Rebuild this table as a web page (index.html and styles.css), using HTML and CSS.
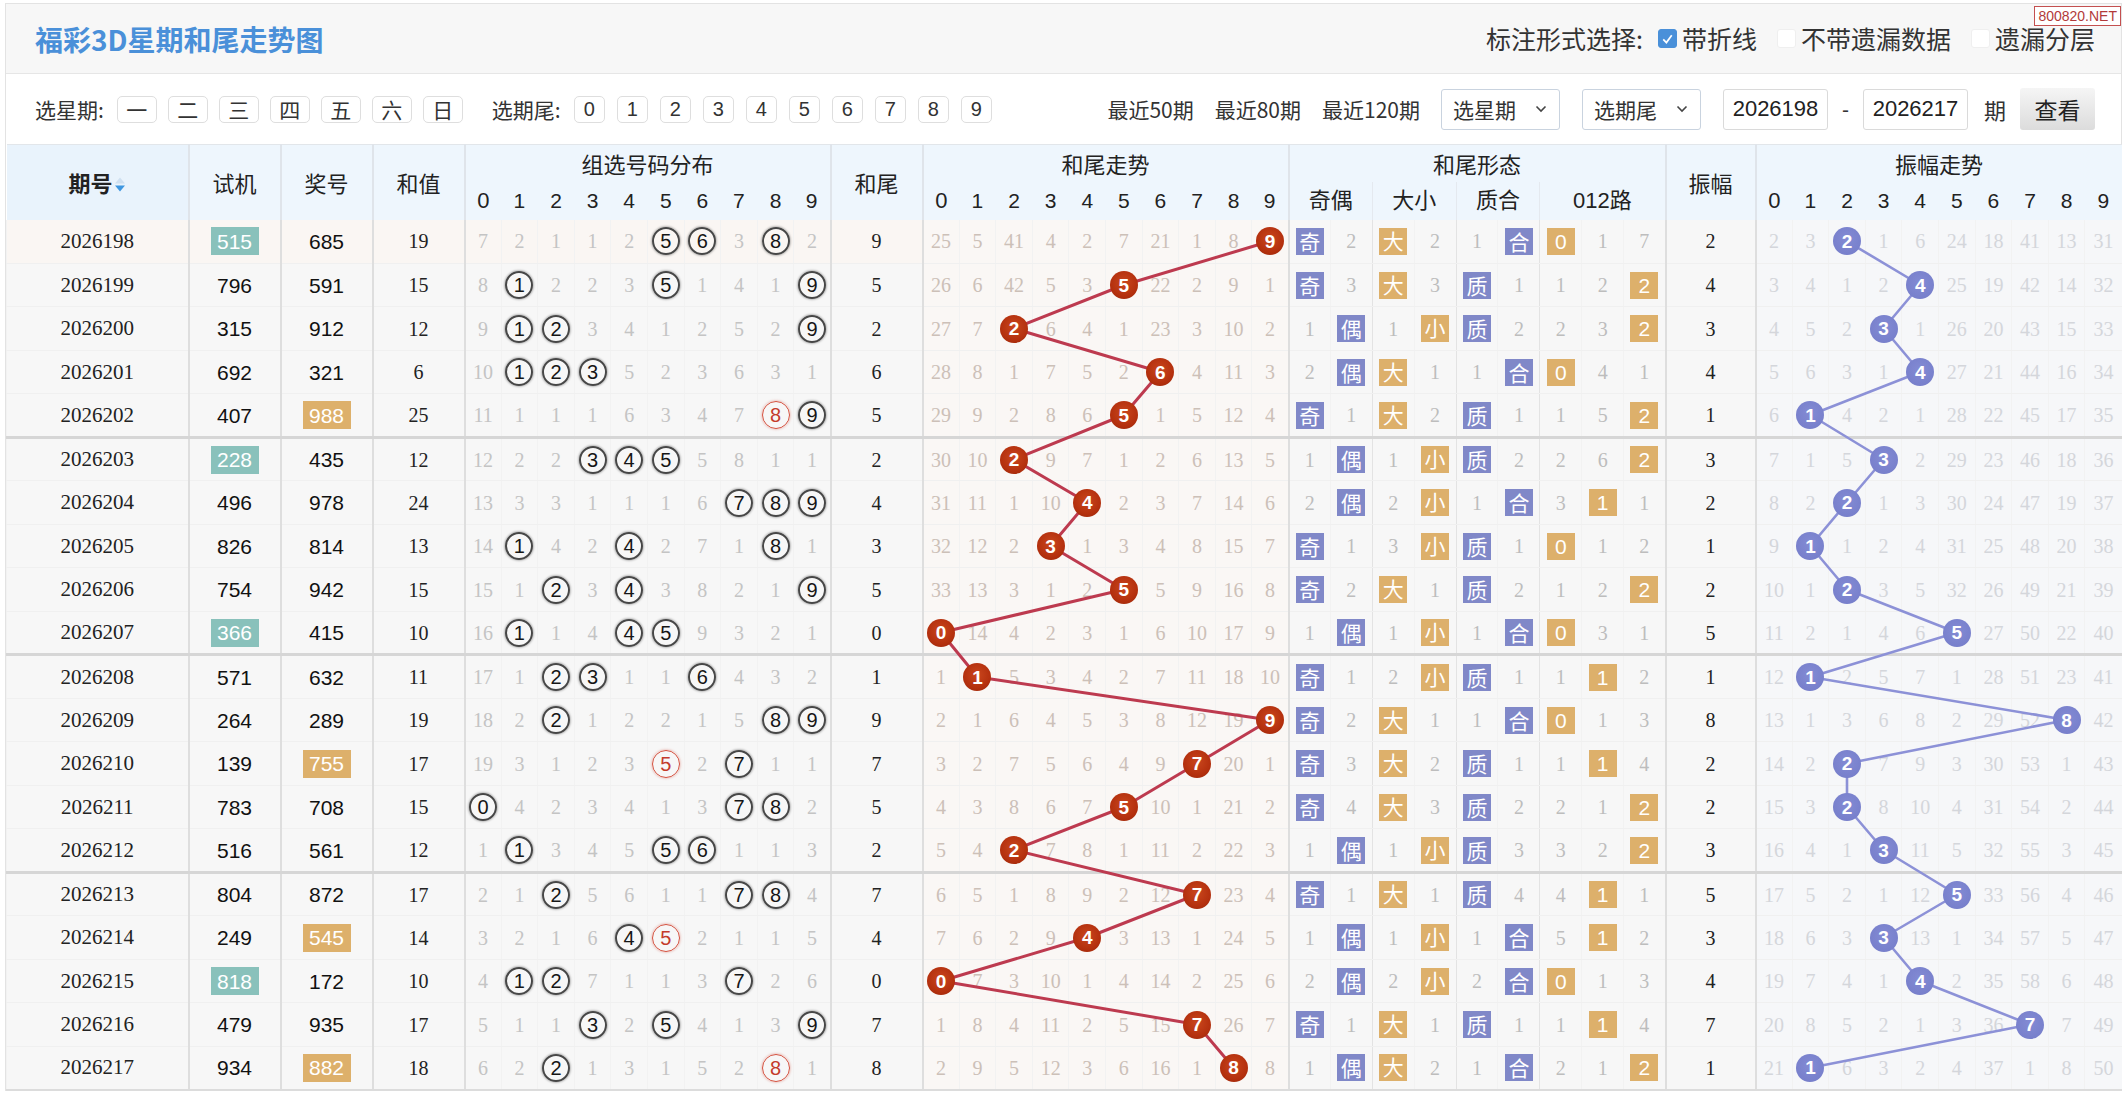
FILE: index.html
```html
<!DOCTYPE html>
<html lang="zh-CN">
<head>
<meta charset="utf-8">
<title>福彩3D星期和尾走势图</title>
<link rel="stylesheet" href="styles.css">
</head>
<body>
<div class="page">
  <div class="titlebar">
    <h1 class="title">福彩3D星期和尾走势图</h1>
    <div class="marks">
      <span class="mlabel">标注形式选择:</span>
      <span class="cb on"><svg viewBox="0 0 18 18" width="18" height="18"><polyline points="4.5,9.5 7.8,12.8 13.5,5" fill="none" stroke="#fff" stroke-width="1.8"/></svg></span><span class="mtext">带折线</span>
      <span class="cb"></span><span class="mtext">不带遗漏数据</span>
      <span class="cb"></span><span class="mtext">遗漏分层</span>
    </div>
    <span class="wm">800820.NET</span>
  </div>

  <div class="filters">
    <span class="lbl">选星期:</span>
    <div class="btns wk">
      <span class="btn">一</span><span class="btn">二</span><span class="btn">三</span><span class="btn">四</span><span class="btn">五</span><span class="btn">六</span><span class="btn">日</span>
    </div>
    <span class="lbl lbl2">选期尾:</span>
    <div class="btns tl">
      <span class="btn">0</span><span class="btn">1</span><span class="btn">2</span><span class="btn">3</span><span class="btn">4</span><span class="btn">5</span><span class="btn">6</span><span class="btn">7</span><span class="btn">8</span><span class="btn">9</span>
    </div>
    <div class="right">
      <span class="near">最近50期</span>
      <span class="near">最近80期</span>
      <span class="near">最近120期</span>
      <span class="sel">选星期<svg class="chev" viewBox="0 0 12 8" width="12" height="8"><polyline points="1.5,1.5 6,6 10.5,1.5" fill="none" stroke="#444" stroke-width="1.6"/></svg></span>
      <span class="sel">选期尾<svg class="chev" viewBox="0 0 12 8" width="12" height="8"><polyline points="1.5,1.5 6,6 10.5,1.5" fill="none" stroke="#444" stroke-width="1.6"/></svg></span>
      <span class="ipt">2026198</span>
      <span class="dash">-</span>
      <span class="ipt">2026217</span>
      <span class="qi">期</span>
      <span class="go">查看</span>
    </div>
  </div>

  <div class="chart">
    <table class="trend">
      <colgroup>
        <col class="w-qh"><col class="w-m"><col class="w-m"><col class="w-m">
        <col class="w-d"><col class="w-d"><col class="w-d"><col class="w-d"><col class="w-d"><col class="w-d"><col class="w-d"><col class="w-d"><col class="w-d"><col class="w-d">
        <col class="w-m">
        <col class="w-d"><col class="w-d"><col class="w-d"><col class="w-d"><col class="w-d"><col class="w-d"><col class="w-d"><col class="w-d"><col class="w-d"><col class="w-d">
        <col class="w-x"><col class="w-x"><col class="w-x"><col class="w-x"><col class="w-x"><col class="w-x"><col class="w-x"><col class="w-x"><col class="w-x">
        <col class="w-z">
        <col class="w-d"><col class="w-d"><col class="w-d"><col class="w-d"><col class="w-d"><col class="w-d"><col class="w-d"><col class="w-d"><col class="w-d"><col class="w-d">
      </colgroup>
      <thead>
        <tr class="h1">
          <th rowspan="2" class="qh">期号<svg class="sort" viewBox="0 0 12 18" width="12" height="18"><polygon points="6,1.5 11,7.5 1,7.5" fill="#cfe0f0"/><polygon points="1,9.5 11,9.5 6,15.5" fill="#3f97e0"/></svg></th>
          <th rowspan="2" class="v">试机</th>
          <th rowspan="2" class="v">奖号</th>
          <th rowspan="2" class="v">和值</th>
          <th colspan="10" class="v">组选号码分布</th>
          <th rowspan="2" class="v">和尾</th>
          <th colspan="10" class="v">和尾走势</th>
          <th colspan="9" class="v">和尾形态</th>
          <th rowspan="2" class="v">振幅</th>
          <th colspan="10" class="v">振幅走势</th>
        </tr>
        <tr class="h2">
          <th class="v">0</th><th>1</th><th>2</th><th>3</th><th>4</th><th>5</th><th>6</th><th>7</th><th>8</th><th>9</th>
          <th class="v">0</th><th>1</th><th>2</th><th>3</th><th>4</th><th>5</th><th>6</th><th>7</th><th>8</th><th>9</th>
          <th colspan="2" class="v">奇偶</th><th colspan="2" class="s">大小</th><th colspan="2" class="s">质合</th><th colspan="3" class="s">012路</th>
          <th class="v">0</th><th>1</th><th>2</th><th>3</th><th>4</th><th>5</th><th>6</th><th>7</th><th>8</th><th>9</th>
        </tr>
      </thead>
      <tbody>
<tr class="hot"><td>2026198</td><td><i class="st">515</i></td><td>685</td><td>19</td><td>7</td><td>2</td><td>1</td><td>1</td><td>2</td><td><i class="rg">5</i></td><td><i class="rg">6</i></td><td>3</td><td><i class="rg">8</i></td><td>2</td><td>9</td><td>25</td><td>5</td><td>41</td><td>4</td><td>2</td><td>7</td><td>21</td><td>1</td><td>8</td><td><i class="bh">9</i></td><td><i class="tp">奇</i></td><td>2</td><td><i class="to">大</i></td><td>2</td><td>1</td><td><i class="tp">合</i></td><td><i class="to">0</i></td><td>1</td><td>7</td><td>2</td><td>2</td><td>3</td><td><i class="bz">2</i></td><td>1</td><td>6</td><td>24</td><td>18</td><td>41</td><td>13</td><td>31</td></tr>
<tr><td>2026199</td><td>796</td><td>591</td><td>15</td><td>8</td><td><i class="rg">1</i></td><td>2</td><td>2</td><td>3</td><td><i class="rg">5</i></td><td>1</td><td>4</td><td>1</td><td><i class="rg">9</i></td><td>5</td><td>26</td><td>6</td><td>42</td><td>5</td><td>3</td><td><i class="bh">5</i></td><td>22</td><td>2</td><td>9</td><td>1</td><td><i class="tp">奇</i></td><td>3</td><td><i class="to">大</i></td><td>3</td><td><i class="tp">质</i></td><td>1</td><td>1</td><td>2</td><td><i class="to">2</i></td><td>4</td><td>3</td><td>4</td><td>1</td><td>2</td><td><i class="bz">4</i></td><td>25</td><td>19</td><td>42</td><td>14</td><td>32</td></tr>
<tr><td>2026200</td><td>315</td><td>912</td><td>12</td><td>9</td><td><i class="rg">1</i></td><td><i class="rg">2</i></td><td>3</td><td>4</td><td>1</td><td>2</td><td>5</td><td>2</td><td><i class="rg">9</i></td><td>2</td><td>27</td><td>7</td><td><i class="bh">2</i></td><td>6</td><td>4</td><td>1</td><td>23</td><td>3</td><td>10</td><td>2</td><td>1</td><td><i class="tp">偶</i></td><td>1</td><td><i class="to">小</i></td><td><i class="tp">质</i></td><td>2</td><td>2</td><td>3</td><td><i class="to">2</i></td><td>3</td><td>4</td><td>5</td><td>2</td><td><i class="bz">3</i></td><td>1</td><td>26</td><td>20</td><td>43</td><td>15</td><td>33</td></tr>
<tr><td>2026201</td><td>692</td><td>321</td><td>6</td><td>10</td><td><i class="rg">1</i></td><td><i class="rg">2</i></td><td><i class="rg">3</i></td><td>5</td><td>2</td><td>3</td><td>6</td><td>3</td><td>1</td><td>6</td><td>28</td><td>8</td><td>1</td><td>7</td><td>5</td><td>2</td><td><i class="bh">6</i></td><td>4</td><td>11</td><td>3</td><td>2</td><td><i class="tp">偶</i></td><td><i class="to">大</i></td><td>1</td><td>1</td><td><i class="tp">合</i></td><td><i class="to">0</i></td><td>4</td><td>1</td><td>4</td><td>5</td><td>6</td><td>3</td><td>1</td><td><i class="bz">4</i></td><td>27</td><td>21</td><td>44</td><td>16</td><td>34</td></tr>
<tr><td>2026202</td><td>407</td><td><i class="jo">988</i></td><td>25</td><td>11</td><td>1</td><td>1</td><td>1</td><td>6</td><td>3</td><td>4</td><td>7</td><td><i class="rg rr">8</i></td><td><i class="rg">9</i></td><td>5</td><td>29</td><td>9</td><td>2</td><td>8</td><td>6</td><td><i class="bh">5</i></td><td>1</td><td>5</td><td>12</td><td>4</td><td><i class="tp">奇</i></td><td>1</td><td><i class="to">大</i></td><td>2</td><td><i class="tp">质</i></td><td>1</td><td>1</td><td>5</td><td><i class="to">2</i></td><td>1</td><td>6</td><td><i class="bz">1</i></td><td>4</td><td>2</td><td>1</td><td>28</td><td>22</td><td>45</td><td>17</td><td>35</td></tr>
<tr><td>2026203</td><td><i class="st">228</i></td><td>435</td><td>12</td><td>12</td><td>2</td><td>2</td><td><i class="rg">3</i></td><td><i class="rg">4</i></td><td><i class="rg">5</i></td><td>5</td><td>8</td><td>1</td><td>1</td><td>2</td><td>30</td><td>10</td><td><i class="bh">2</i></td><td>9</td><td>7</td><td>1</td><td>2</td><td>6</td><td>13</td><td>5</td><td>1</td><td><i class="tp">偶</i></td><td>1</td><td><i class="to">小</i></td><td><i class="tp">质</i></td><td>2</td><td>2</td><td>6</td><td><i class="to">2</i></td><td>3</td><td>7</td><td>1</td><td>5</td><td><i class="bz">3</i></td><td>2</td><td>29</td><td>23</td><td>46</td><td>18</td><td>36</td></tr>
<tr><td>2026204</td><td>496</td><td>978</td><td>24</td><td>13</td><td>3</td><td>3</td><td>1</td><td>1</td><td>1</td><td>6</td><td><i class="rg">7</i></td><td><i class="rg">8</i></td><td><i class="rg">9</i></td><td>4</td><td>31</td><td>11</td><td>1</td><td>10</td><td><i class="bh">4</i></td><td>2</td><td>3</td><td>7</td><td>14</td><td>6</td><td>2</td><td><i class="tp">偶</i></td><td>2</td><td><i class="to">小</i></td><td>1</td><td><i class="tp">合</i></td><td>3</td><td><i class="to">1</i></td><td>1</td><td>2</td><td>8</td><td>2</td><td><i class="bz">2</i></td><td>1</td><td>3</td><td>30</td><td>24</td><td>47</td><td>19</td><td>37</td></tr>
<tr><td>2026205</td><td>826</td><td>814</td><td>13</td><td>14</td><td><i class="rg">1</i></td><td>4</td><td>2</td><td><i class="rg">4</i></td><td>2</td><td>7</td><td>1</td><td><i class="rg">8</i></td><td>1</td><td>3</td><td>32</td><td>12</td><td>2</td><td><i class="bh">3</i></td><td>1</td><td>3</td><td>4</td><td>8</td><td>15</td><td>7</td><td><i class="tp">奇</i></td><td>1</td><td>3</td><td><i class="to">小</i></td><td><i class="tp">质</i></td><td>1</td><td><i class="to">0</i></td><td>1</td><td>2</td><td>1</td><td>9</td><td><i class="bz">1</i></td><td>1</td><td>2</td><td>4</td><td>31</td><td>25</td><td>48</td><td>20</td><td>38</td></tr>
<tr><td>2026206</td><td>754</td><td>942</td><td>15</td><td>15</td><td>1</td><td><i class="rg">2</i></td><td>3</td><td><i class="rg">4</i></td><td>3</td><td>8</td><td>2</td><td>1</td><td><i class="rg">9</i></td><td>5</td><td>33</td><td>13</td><td>3</td><td>1</td><td>2</td><td><i class="bh">5</i></td><td>5</td><td>9</td><td>16</td><td>8</td><td><i class="tp">奇</i></td><td>2</td><td><i class="to">大</i></td><td>1</td><td><i class="tp">质</i></td><td>2</td><td>1</td><td>2</td><td><i class="to">2</i></td><td>2</td><td>10</td><td>1</td><td><i class="bz">2</i></td><td>3</td><td>5</td><td>32</td><td>26</td><td>49</td><td>21</td><td>39</td></tr>
<tr><td>2026207</td><td><i class="st">366</i></td><td>415</td><td>10</td><td>16</td><td><i class="rg">1</i></td><td>1</td><td>4</td><td><i class="rg">4</i></td><td><i class="rg">5</i></td><td>9</td><td>3</td><td>2</td><td>1</td><td>0</td><td><i class="bh">0</i></td><td>14</td><td>4</td><td>2</td><td>3</td><td>1</td><td>6</td><td>10</td><td>17</td><td>9</td><td>1</td><td><i class="tp">偶</i></td><td>1</td><td><i class="to">小</i></td><td>1</td><td><i class="tp">合</i></td><td><i class="to">0</i></td><td>3</td><td>1</td><td>5</td><td>11</td><td>2</td><td>1</td><td>4</td><td>6</td><td><i class="bz">5</i></td><td>27</td><td>50</td><td>22</td><td>40</td></tr>
<tr><td>2026208</td><td>571</td><td>632</td><td>11</td><td>17</td><td>1</td><td><i class="rg">2</i></td><td><i class="rg">3</i></td><td>1</td><td>1</td><td><i class="rg">6</i></td><td>4</td><td>3</td><td>2</td><td>1</td><td>1</td><td><i class="bh">1</i></td><td>5</td><td>3</td><td>4</td><td>2</td><td>7</td><td>11</td><td>18</td><td>10</td><td><i class="tp">奇</i></td><td>1</td><td>2</td><td><i class="to">小</i></td><td><i class="tp">质</i></td><td>1</td><td>1</td><td><i class="to">1</i></td><td>2</td><td>1</td><td>12</td><td><i class="bz">1</i></td><td>2</td><td>5</td><td>7</td><td>1</td><td>28</td><td>51</td><td>23</td><td>41</td></tr>
<tr><td>2026209</td><td>264</td><td>289</td><td>19</td><td>18</td><td>2</td><td><i class="rg">2</i></td><td>1</td><td>2</td><td>2</td><td>1</td><td>5</td><td><i class="rg">8</i></td><td><i class="rg">9</i></td><td>9</td><td>2</td><td>1</td><td>6</td><td>4</td><td>5</td><td>3</td><td>8</td><td>12</td><td>19</td><td><i class="bh">9</i></td><td><i class="tp">奇</i></td><td>2</td><td><i class="to">大</i></td><td>1</td><td>1</td><td><i class="tp">合</i></td><td><i class="to">0</i></td><td>1</td><td>3</td><td>8</td><td>13</td><td>1</td><td>3</td><td>6</td><td>8</td><td>2</td><td>29</td><td>52</td><td><i class="bz">8</i></td><td>42</td></tr>
<tr><td>2026210</td><td>139</td><td><i class="jo">755</i></td><td>17</td><td>19</td><td>3</td><td>1</td><td>2</td><td>3</td><td><i class="rg rr">5</i></td><td>2</td><td><i class="rg">7</i></td><td>1</td><td>1</td><td>7</td><td>3</td><td>2</td><td>7</td><td>5</td><td>6</td><td>4</td><td>9</td><td><i class="bh">7</i></td><td>20</td><td>1</td><td><i class="tp">奇</i></td><td>3</td><td><i class="to">大</i></td><td>2</td><td><i class="tp">质</i></td><td>1</td><td>1</td><td><i class="to">1</i></td><td>4</td><td>2</td><td>14</td><td>2</td><td><i class="bz">2</i></td><td>7</td><td>9</td><td>3</td><td>30</td><td>53</td><td>1</td><td>43</td></tr>
<tr><td>2026211</td><td>783</td><td>708</td><td>15</td><td><i class="rg">0</i></td><td>4</td><td>2</td><td>3</td><td>4</td><td>1</td><td>3</td><td><i class="rg">7</i></td><td><i class="rg">8</i></td><td>2</td><td>5</td><td>4</td><td>3</td><td>8</td><td>6</td><td>7</td><td><i class="bh">5</i></td><td>10</td><td>1</td><td>21</td><td>2</td><td><i class="tp">奇</i></td><td>4</td><td><i class="to">大</i></td><td>3</td><td><i class="tp">质</i></td><td>2</td><td>2</td><td>1</td><td><i class="to">2</i></td><td>2</td><td>15</td><td>3</td><td><i class="bz">2</i></td><td>8</td><td>10</td><td>4</td><td>31</td><td>54</td><td>2</td><td>44</td></tr>
<tr><td>2026212</td><td>516</td><td>561</td><td>12</td><td>1</td><td><i class="rg">1</i></td><td>3</td><td>4</td><td>5</td><td><i class="rg">5</i></td><td><i class="rg">6</i></td><td>1</td><td>1</td><td>3</td><td>2</td><td>5</td><td>4</td><td><i class="bh">2</i></td><td>7</td><td>8</td><td>1</td><td>11</td><td>2</td><td>22</td><td>3</td><td>1</td><td><i class="tp">偶</i></td><td>1</td><td><i class="to">小</i></td><td><i class="tp">质</i></td><td>3</td><td>3</td><td>2</td><td><i class="to">2</i></td><td>3</td><td>16</td><td>4</td><td>1</td><td><i class="bz">3</i></td><td>11</td><td>5</td><td>32</td><td>55</td><td>3</td><td>45</td></tr>
<tr><td>2026213</td><td>804</td><td>872</td><td>17</td><td>2</td><td>1</td><td><i class="rg">2</i></td><td>5</td><td>6</td><td>1</td><td>1</td><td><i class="rg">7</i></td><td><i class="rg">8</i></td><td>4</td><td>7</td><td>6</td><td>5</td><td>1</td><td>8</td><td>9</td><td>2</td><td>12</td><td><i class="bh">7</i></td><td>23</td><td>4</td><td><i class="tp">奇</i></td><td>1</td><td><i class="to">大</i></td><td>1</td><td><i class="tp">质</i></td><td>4</td><td>4</td><td><i class="to">1</i></td><td>1</td><td>5</td><td>17</td><td>5</td><td>2</td><td>1</td><td>12</td><td><i class="bz">5</i></td><td>33</td><td>56</td><td>4</td><td>46</td></tr>
<tr><td>2026214</td><td>249</td><td><i class="jo">545</i></td><td>14</td><td>3</td><td>2</td><td>1</td><td>6</td><td><i class="rg">4</i></td><td><i class="rg rr">5</i></td><td>2</td><td>1</td><td>1</td><td>5</td><td>4</td><td>7</td><td>6</td><td>2</td><td>9</td><td><i class="bh">4</i></td><td>3</td><td>13</td><td>1</td><td>24</td><td>5</td><td>1</td><td><i class="tp">偶</i></td><td>1</td><td><i class="to">小</i></td><td>1</td><td><i class="tp">合</i></td><td>5</td><td><i class="to">1</i></td><td>2</td><td>3</td><td>18</td><td>6</td><td>3</td><td><i class="bz">3</i></td><td>13</td><td>1</td><td>34</td><td>57</td><td>5</td><td>47</td></tr>
<tr><td>2026215</td><td><i class="st">818</i></td><td>172</td><td>10</td><td>4</td><td><i class="rg">1</i></td><td><i class="rg">2</i></td><td>7</td><td>1</td><td>1</td><td>3</td><td><i class="rg">7</i></td><td>2</td><td>6</td><td>0</td><td><i class="bh">0</i></td><td>7</td><td>3</td><td>10</td><td>1</td><td>4</td><td>14</td><td>2</td><td>25</td><td>6</td><td>2</td><td><i class="tp">偶</i></td><td>2</td><td><i class="to">小</i></td><td>2</td><td><i class="tp">合</i></td><td><i class="to">0</i></td><td>1</td><td>3</td><td>4</td><td>19</td><td>7</td><td>4</td><td>1</td><td><i class="bz">4</i></td><td>2</td><td>35</td><td>58</td><td>6</td><td>48</td></tr>
<tr><td>2026216</td><td>479</td><td>935</td><td>17</td><td>5</td><td>1</td><td>1</td><td><i class="rg">3</i></td><td>2</td><td><i class="rg">5</i></td><td>4</td><td>1</td><td>3</td><td><i class="rg">9</i></td><td>7</td><td>1</td><td>8</td><td>4</td><td>11</td><td>2</td><td>5</td><td>15</td><td><i class="bh">7</i></td><td>26</td><td>7</td><td><i class="tp">奇</i></td><td>1</td><td><i class="to">大</i></td><td>1</td><td><i class="tp">质</i></td><td>1</td><td>1</td><td><i class="to">1</i></td><td>4</td><td>7</td><td>20</td><td>8</td><td>5</td><td>2</td><td>1</td><td>3</td><td>36</td><td><i class="bz">7</i></td><td>7</td><td>49</td></tr>
<tr><td>2026217</td><td>934</td><td><i class="jo">882</i></td><td>18</td><td>6</td><td>2</td><td><i class="rg">2</i></td><td>1</td><td>3</td><td>1</td><td>5</td><td>2</td><td><i class="rg rr">8</i></td><td>1</td><td>8</td><td>2</td><td>9</td><td>5</td><td>12</td><td>3</td><td>6</td><td>16</td><td>1</td><td><i class="bh">8</i></td><td>8</td><td>1</td><td><i class="tp">偶</i></td><td><i class="to">大</i></td><td>2</td><td>1</td><td><i class="tp">合</i></td><td>2</td><td>1</td><td><i class="to">2</i></td><td>1</td><td>21</td><td><i class="bz">1</i></td><td>6</td><td>3</td><td>2</td><td>4</td><td>37</td><td>1</td><td>8</td><td>50</td></tr>
      </tbody>
    </table>
    <svg class="lines" aria-hidden="true"></svg>
  </div>
</div>
<script src="script.js"></script>
</body>
</html>
```

FILE: styles.css
```css
* { box-sizing: border-box; }
body {
  margin: 0;
  background: #fff;
  color: #222;
  font-family: "Noto Sans CJK SC", "Liberation Sans", sans-serif;
}
.page {
  margin: 3px 1px 0 5px;
  border: 1px solid #e3e3e3;
  border-bottom: none;
  position: relative;
}

/* title bar */
.titlebar {
  height: 70px;
  background: #f7f7f7;
  border-bottom: 1px solid #e6e6e6;
  display: flex;
  align-items: center;
  padding: 0 26px 0 29px;
}
.title {
  margin: 0;
  font-size: 28px;
  font-weight: bold;
  color: #4a90d9;
  line-height: 1;
}
.marks {
  margin-left: auto;
  display: flex;
  align-items: center;
  font-size: 25px;
  color: #333;
  line-height: 1;
}
.cb {
  width: 19px;
  height: 19px;
  border-radius: 3px;
  background: #fff;
  border: 1px solid #efefef;
  margin: 0 5px 0 20px;
  display: inline-flex;
}
.cb.on {
  background: #4a90d9;
  border-color: #4a90d9;
  margin-left: 15px;
}
.cb svg { display: block; }
.wm {
  position: absolute;
  top: 2px;
  right: 0;
  font: 14px/1 "Liberation Sans", sans-serif;
  color: #b23a3a;
  border: 1px solid #c45050;
  padding: 2px 3px;
  background: #fff;
}

/* filter bar */
.filters {
  height: 70px;
  display: flex;
  align-items: center;
  padding: 0 26px 0 29px;
  font-size: 21px;
  color: #333;
  line-height: 1;
}
.lbl { margin-right: 13px; }
.lbl2 { margin-left: 29px; }
.btns { display: flex; gap: 11px; }
.tl { gap: 12px; }
.btn {
  width: 40px;
  height: 27px;
  border: 1px solid #dedede;
  border-radius: 5px;
  background: #fff;
  display: inline-flex;
  align-items: center;
  justify-content: center;
  font-size: 21px;
}
.tl .btn {
  width: 31px;
  font-family: "Liberation Sans", sans-serif;
  font-size: 20px;
}
.right {
  margin-left: auto;
  display: flex;
  align-items: center;
}
.near { margin-right: 21px; }
.sel {
  width: 119px;
  height: 41px;
  border: 1px solid #c9d3df;
  border-radius: 3px;
  padding: 0 0 0 11px;
  display: inline-flex;
  align-items: center;
  margin-right: 22px;
  background: #fff;
}
.chev { margin-left: auto; margin-right: 12px; }
.ipt {
  width: 105px;
  height: 41px;
  border: 1px solid #dadada;
  border-radius: 3px;
  display: inline-flex;
  align-items: center;
  justify-content: center;
  font: 22px/1 "Liberation Sans", sans-serif;
  color: #222;
  background: #fff;
}
.dash { margin: 0 14px 0 14px; font-family: "Liberation Sans", sans-serif; }
.qi { margin: 0 14px 0 16px; font-size: 22px; }
.go {
  width: 75px;
  height: 42px;
  border-radius: 3px;
  background: linear-gradient(#f5f5f5, #dcdcdc);
  display: inline-flex;
  align-items: center;
  justify-content: center;
  font-size: 23px;
  color: #222;
}

/* chart */
.chart { position: relative; }
.trend {
  width: 2115px;
  table-layout: fixed;
  border-collapse: collapse;
}
.w-qh { width: 182px; }
.w-m { width: 92px; }
.w-d { width: 36.6px; }
.w-x { width: 41.9px; }
.w-z { width: 90px; }

.trend th {
  background: #eef6fd;
  font-weight: normal;
  font-size: 22px;
  color: #222;
  padding: 0;
  line-height: 1;
  border-top: 1px solid #e2e6ea;
}
.trend .h1 th { height: 37px; }
.trend .h2 th {
  height: 38px;
  font-family: "Liberation Sans", "Noto Sans CJK SC", sans-serif;
  font-size: 21px;
  border-top: none;
}
.trend .h2 th.v, .trend .h2 th.s { font-size: 22px; }
.trend th.v { border-left: 2px solid #dfe4ea; }
.trend th.s { border-left: 1px solid #e4e9ef; }
.trend th.qh {
  background: #e9f3fc;
  font-weight: bold;
  font-size: 22px;
}
.sort { vertical-align: -2px; margin-left: 1px; }

.trend td {
  height: 43px;
  padding: 0;
  text-align: center;
  vertical-align: middle;
  background: #f7f7f7;
  font: 20px/1 "Liberation Serif", serif;
  color: #222;
  border-bottom: 1px solid #f0f0f0;
  border-left: 1px solid #f2f2f2;
}
.trend tbody tr:nth-child(odd) td { height: 44px; }
.trend td:nth-child(1) { font-size: 21px; }
.trend td:nth-child(2), .trend td:nth-child(3) {
  font: 21px/1 "Liberation Sans", sans-serif;
  color: #111;
}
.trend td:nth-child(n+5):nth-child(-n+14) { color: #c4c4c4; }
.trend td:nth-child(n+16):nth-child(-n+25) { color: #ccc0b8; background: #faf7f5; }
.trend td:nth-child(n+26):nth-child(-n+34) { color: #bdbdbd; }
.trend td:nth-child(n+36) { color: #d4d6db; background: #f6f7f9; }

.trend td:nth-child(2), .trend td:nth-child(3), .trend td:nth-child(4),
.trend td:nth-child(5), .trend td:nth-child(15), .trend td:nth-child(16),
.trend td:nth-child(26), .trend td:nth-child(35), .trend td:nth-child(36) {
  border-left: 2px solid #dedede;
}
.trend td:nth-child(28), .trend td:nth-child(30), .trend td:nth-child(32) {
  border-left: 1px solid #e3e3e3;
}
.trend tbody tr:nth-child(5n):not(:last-child) td { border-bottom: 3px solid #d6d6d6; }
.trend tbody tr:last-child td { border-bottom: 2px solid #dcdcdc; }
.trend tr.hot td:nth-child(-n+15) { background: #faf6f3; }

.trend i {
  font-style: normal;
  display: inline-flex;
  align-items: center;
  justify-content: center;
  vertical-align: middle;
  position: relative;
  z-index: 2;
  line-height: 1;
}
.rg {
  width: 28px;
  height: 28px;
  border-radius: 50%;
  border: 2px solid #474747;
  box-shadow: 0 0 2px 1px rgba(0, 0, 0, 0.25);
  font: 20px/1 "Liberation Sans", sans-serif;
  color: #151515;
}
.rg.rr {
  border: 1.5px solid #d4503e;
  box-shadow: 0 0 2px 1px rgba(212, 80, 62, 0.25);
  color: #c43c2c;
}
.bh {
  width: 28px;
  height: 28px;
  border-radius: 50%;
  background: radial-gradient(circle at 50% 42%, #c9461d 0%, #b4300e 62%, #952509 100%);
  color: #fff;
  font: bold 19px/1 "Liberation Sans", sans-serif;
}
.bz {
  width: 28px;
  height: 28px;
  border-radius: 50%;
  background: radial-gradient(circle at 50% 42%, #838bd4 0%, #7880cc 70%, #6e76c2 100%);
  color: #fff;
  font: bold 19px/1 "Liberation Sans", sans-serif;
}
.st, .jo {
  width: 48px;
  height: 28px;
  color: #fff;
  font: 21px/1 "Liberation Sans", sans-serif;
}
.st { background: #89c1bb; }
.jo { background: #ddb06b; }
.tp, .to {
  width: 28px;
  height: 27px;
  color: #fff;
  font: 21px/1 "Noto Sans CJK SC", "Liberation Sans", sans-serif;
}
.tp { background: #8088c8; }
.to { background: #ddb06b; font-family: "Liberation Sans", "Noto Sans CJK SC", sans-serif; }

.lines {
  position: absolute;
  left: 0;
  top: 0;
  z-index: 1;
  pointer-events: none;
}
```

FILE: script.js
```js
(function () {
  var NS = 'http://www.w3.org/2000/svg';
  function draw() {
    var wrap = document.querySelector('.chart');
    var svg = document.querySelector('.lines');
    var r = wrap.getBoundingClientRect();
    svg.setAttribute('width', r.width);
    svg.setAttribute('height', r.height);
    svg.setAttribute('viewBox', '0 0 ' + r.width + ' ' + r.height);
    while (svg.firstChild) svg.removeChild(svg.firstChild);
    [['.bh', '#bd3a4f', 3], ['.bz', '#8c91d7', 2.6]].forEach(function (s) {
      var pts = [].map.call(document.querySelectorAll(s[0]), function (e) {
        var b = e.getBoundingClientRect();
        return ((b.left + b.right) / 2 - r.left).toFixed(1) + ',' + ((b.top + b.bottom) / 2 - r.top).toFixed(1);
      });
      var pl = document.createElementNS(NS, 'polyline');
      pl.setAttribute('points', pts.join(' '));
      pl.setAttribute('fill', 'none');
      pl.setAttribute('stroke', s[1]);
      pl.setAttribute('stroke-width', s[2]);
      pl.setAttribute('stroke-linejoin', 'round');
      svg.appendChild(pl);
    });
  }
  draw();
  window.addEventListener('load', draw);
  if (document.fonts && document.fonts.ready) document.fonts.ready.then(draw);
})();
```
